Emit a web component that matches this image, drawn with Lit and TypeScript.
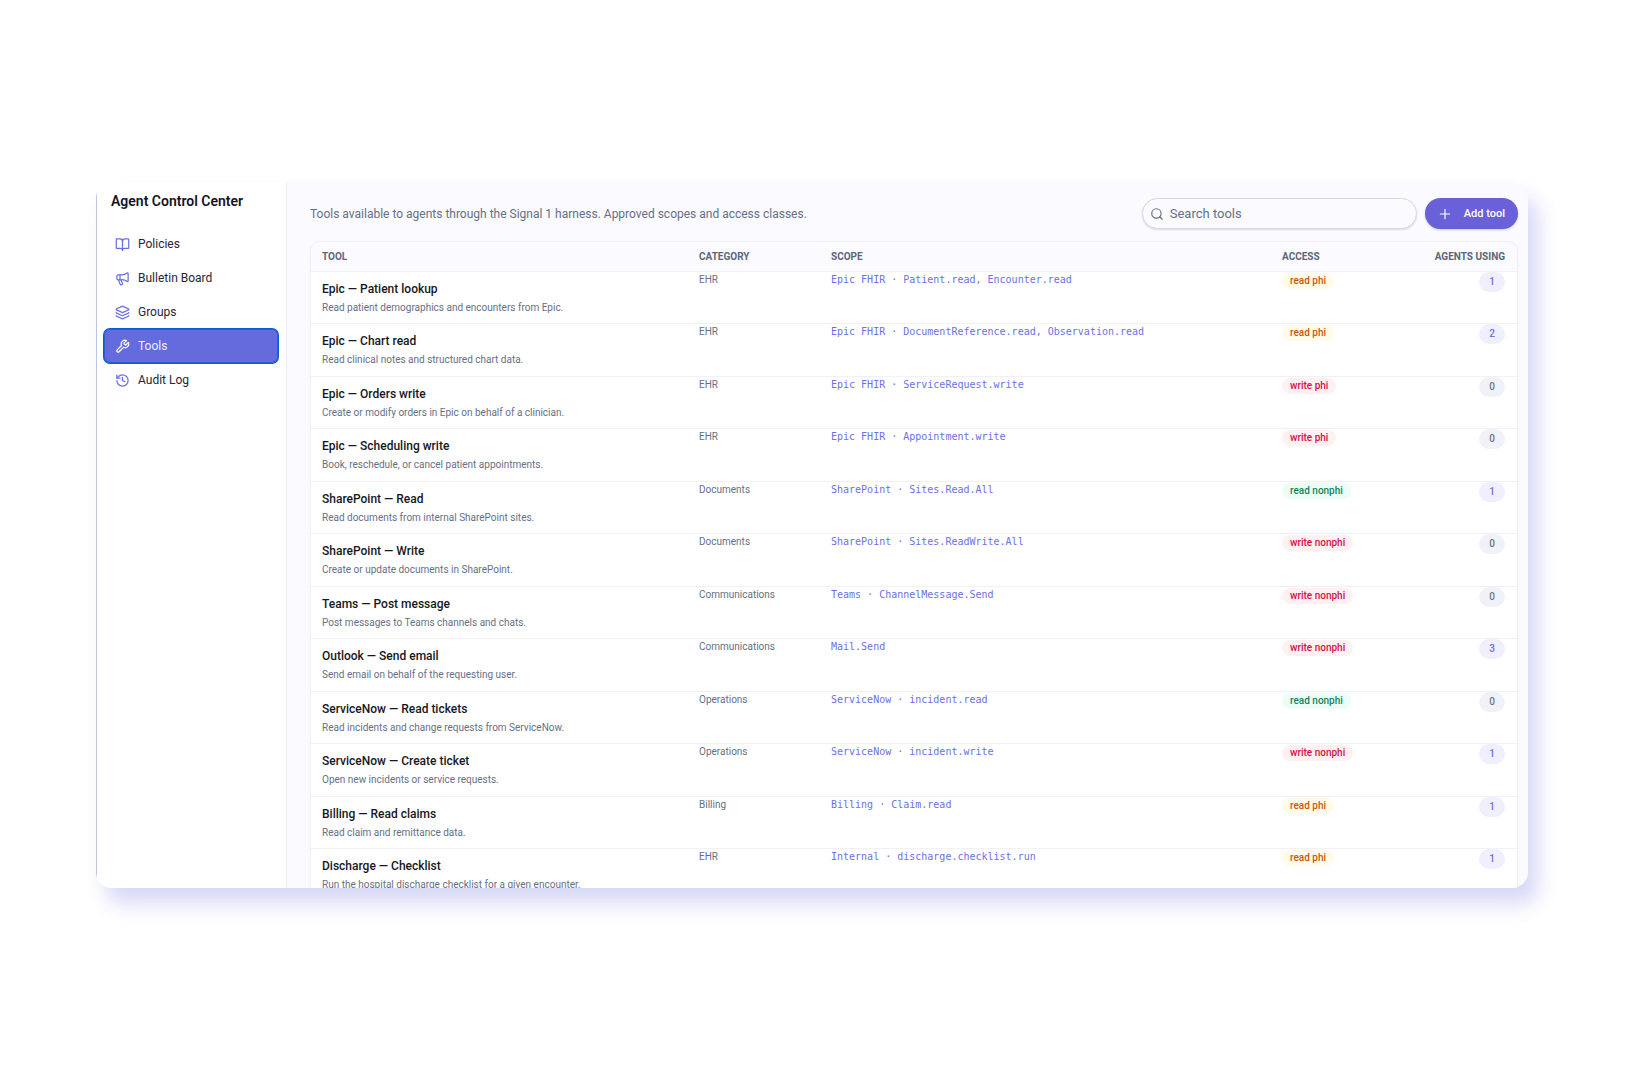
import { LitElement, html, css, svg } from "lit";
import { customElement, state } from "lit/decorators.js";
import { classMap } from "lit/directives/class-map.js";

type Access = "read phi" | "write phi" | "read nonphi" | "write nonphi";

interface Tool {
  name: string;
  summary: string;
  category: string;
  scope: string;
  access: Access;
  agents: number;
}

const TOOLS: Tool[] = [
  { name: "Epic — Patient lookup", summary: "Read patient demographics and encounters from Epic.", category: "EHR", scope: "Epic FHIR · Patient.read, Encounter.read", access: "read phi", agents: 1 },
  { name: "Epic — Chart read", summary: "Read clinical notes and structured chart data.", category: "EHR", scope: "Epic FHIR · DocumentReference.read, Observation.read", access: "read phi", agents: 2 },
  { name: "Epic — Orders write", summary: "Create or modify orders in Epic on behalf of a clinician.", category: "EHR", scope: "Epic FHIR · ServiceRequest.write", access: "write phi", agents: 0 },
  { name: "Epic — Scheduling write", summary: "Book, reschedule, or cancel patient appointments.", category: "EHR", scope: "Epic FHIR · Appointment.write", access: "write phi", agents: 0 },
  { name: "SharePoint — Read", summary: "Read documents from internal SharePoint sites.", category: "Documents", scope: "SharePoint · Sites.Read.All", access: "read nonphi", agents: 1 },
  { name: "SharePoint — Write", summary: "Create or update documents in SharePoint.", category: "Documents", scope: "SharePoint · Sites.ReadWrite.All", access: "write nonphi", agents: 0 },
  { name: "Teams — Post message", summary: "Post messages to Teams channels and chats.", category: "Communications", scope: "Teams · ChannelMessage.Send", access: "write nonphi", agents: 0 },
  { name: "Outlook — Send email", summary: "Send email on behalf of the requesting user.", category: "Communications", scope: "Mail.Send", access: "write nonphi", agents: 3 },
  { name: "ServiceNow — Read tickets", summary: "Read incidents and change requests from ServiceNow.", category: "Operations", scope: "ServiceNow · incident.read", access: "read nonphi", agents: 0 },
  { name: "ServiceNow — Create ticket", summary: "Open new incidents or service requests.", category: "Operations", scope: "ServiceNow · incident.write", access: "write nonphi", agents: 1 },
  { name: "Billing — Read claims", summary: "Read claim and remittance data.", category: "Billing", scope: "Billing · Claim.read", access: "read phi", agents: 1 },
  { name: "Discharge — Checklist", summary: "Run the hospital discharge checklist for a given encounter.", category: "EHR", scope: "Internal · discharge.checklist.run", access: "read phi", agents: 1 },
];

const ICONS = {
  book: svg`<path d="M12 6v15"/><path d="M3 18a1 1 0 0 1-1-1V4a1 1 0 0 1 1-1h5a4 4 0 0 1 4 4 4 4 0 0 1 4-4h5a1 1 0 0 1 1 1v13a1 1 0 0 1-1 1h-6a3 3 0 0 0-3 3 3 3 0 0 0-3-3z"/>`,
  megaphone: svg`<path d="M11 6a13 13 0 0 0 8.4-2.8A1 1 0 0 1 21 4v12a1 1 0 0 1-1.6.8A13 13 0 0 0 11 14H5a2 2 0 0 1-2-2V8a2 2 0 0 1 2-2z"/><path d="M6 14a12 12 0 0 0 2.4 7.2 2 2 0 0 0 3.2-2.4A8 8 0 0 1 10 14"/><path d="M8 6v8"/>`,
  layers: svg`<path d="M12.83 2.18a2 2 0 0 0-1.66 0L2.6 6.08a1 1 0 0 0 0 1.83l8.58 3.91a2 2 0 0 0 1.66 0l8.58-3.9a1 1 0 0 0 0-1.83z"/><path d="M2 12a1 1 0 0 0 .58.91l8.6 3.91a2 2 0 0 0 1.65 0l8.58-3.9A1 1 0 0 0 22 12"/><path d="M2 17a1 1 0 0 0 .58.91l8.6 3.91a2 2 0 0 0 1.65 0l8.58-3.9A1 1 0 0 0 22 17"/>`,
  wrench: svg`<path d="M14.7 6.3a1 1 0 0 0 0 1.4l1.6 1.6a1 1 0 0 0 1.4 0l3.77-3.77a6 6 0 0 1-7.94 7.94l-6.91 6.91a2.12 2.12 0 0 1-3-3l6.91-6.91a6 6 0 0 1 7.94-7.94l-3.76 3.76z"/>`,
  history: svg`<path d="M3 12a9 9 0 1 0 9-9 9.75 9.75 0 0 0-6.74 2.74L3 8"/><path d="M3 3v5h5"/><path d="M12 7v5l4 2"/>`,
  search: svg`<circle cx="11" cy="11" r="8"/><path d="m21 21-4.3-4.3"/>`,
  plus: svg`<path d="M4 12h16M12 4v16"/>`,
};

const NAV: { label: string; icon: keyof typeof ICONS }[] = [
  { label: "Policies", icon: "book" },
  { label: "Bulletin Board", icon: "megaphone" },
  { label: "Groups", icon: "layers" },
  { label: "Tools", icon: "wrench" },
  { label: "Audit Log", icon: "history" },
];

const icon = (name: keyof typeof ICONS) =>
  html`<svg class="icon icon-${name}" viewBox="0 0 24 24" aria-hidden="true">${ICONS[name]}</svg>`;

@customElement("side-nav")
export class SideNav extends LitElement {
  static styles = css`
    :host {
      display: block;
      box-sizing: border-box;
      padding: 11px 8px 12px 7px;
      background: #fff;
      border-left: 1px solid #bfc3e0;
      border-right: 1px solid #eeeef5;
    }
    .title {
      margin: 0 0 18px;
      padding: 0 7px;
      font-size: 14px;
      line-height: 16px;
      font-weight: 600;
      color: #14141f;
    }
    .item {
      display: flex;
      align-items: center;
      gap: 8px;
      height: 34px;
      padding: 0 11px;
      border-radius: 6px;
      font-size: 12px;
      color: #262633;
      text-decoration: none;
    }
    .icon {
      width: 15px;
      height: 15px;
      fill: none;
      stroke: #6a6ee6;
      stroke-width: 2;
      stroke-linecap: round;
      stroke-linejoin: round;
    }
    .item.current {
      background: #636bdd;
      box-shadow: 0 0 0 1px #0b5ad3, inset 0 0 0 1px #2a60d6;
      color: #f1f1ff;
    }
    .item.current .icon {
      stroke: #fff;
    }
  `;

  @state() private current = "Tools";

  render() {
    return html`
      <h1 class="title">Agent Control Center</h1>
      <nav aria-label="Agent Control Center">
        ${NAV.map(
          (n) => html`<a
            href="#"
            class=${classMap({ item: true, current: n.label === this.current })}
            aria-current=${n.label === this.current ? "page" : "false"}
            @click=${(e: Event) => {
              e.preventDefault();
              this.current = n.label;
            }}
            >${icon(n.icon)}<span>${n.label}</span></a
          >`,
        )}
      </nav>
    `;
  }
}

@customElement("tools-table")
export class ToolsTable extends LitElement {
  static properties = { rows: { attribute: false } };
  declare rows: Tool[];

  static styles = css`
    :host {
      display: block;
      border: 1px solid #f0f0f5;
      border-radius: 10px 10px 0 0;
      background: #fff;
      overflow: hidden;
      box-shadow: 0 1px 3px rgb(30 30 80 / 4%);
    }
    .table {
      width: 100%;
      border-collapse: separate;
      border-spacing: 0;
      table-layout: fixed;
      text-align: left;
    }
    .col-tool { width: 377px; }
    .col-category { width: 132px; }
    .col-access { width: 128px; }
    .col-agents { width: 118px; }
    .head {
      height: 30px;
      box-sizing: border-box;
      padding: 0 12px 0 11px;
      background: #fafaff;
      border-bottom: 1px solid #f0f0f5;
      font-size: 10px;
      font-weight: 700;
      text-transform: uppercase;
      color: #5d6678;
    }
    .row { height: 52px; }
    .row:nth-child(even) { height: 53px; }
    .cell {
      box-sizing: border-box;
      padding: 0 12px 0 11px;
      vertical-align: top;
      border-bottom: 1px solid #f1f1f5;
      font-size: 10px;
      line-height: 16px;
      font-weight: 400;
      color: #667085;
    }
    .row:last-child .cell { border-bottom: 0; }
    .tool { padding-top: 9px; }
    .name {
      display: block;
      margin-bottom: 3px;
      font-size: 12px;
      font-weight: 500;
      color: #171721;
    }
    .scope {
      font-family: "DejaVu Sans Mono", monospace;
      color: #6c70e8;
    }
    .end { text-align: right; }
    .badge {
      display: block;
      width: fit-content;
      margin-top: 1px;
      padding: 0 8px;
      border-radius: 8px;
      font-weight: 500;
    }
    .phi.read { background: #fffbe8; color: #c8570b; }
    .nonphi.read { background: #ebfdf4; color: #18835a; }
    .write { background: #fff0f2; color: #d3104a; }
    .count {
      display: block;
      width: 26px;
      margin-left: auto;
      border-radius: 10px;
      line-height: 20px;
      text-align: center;
      font-weight: 500;
      background: #f0f2f7;
      color: #6b7488;
    }
    .count.used { background: #efeffd; color: #6e72e4; }
  `;

  render() {
    return html`<table class="table">
      <colgroup>
        <col class="col-tool" />
        <col class="col-category" />
        <col />
        <col class="col-access" />
        <col class="col-agents" />
      </colgroup>
      <thead>
        <tr>
          <th class="head" scope="col">Tool</th>
          <th class="head" scope="col">Category</th>
          <th class="head" scope="col">Scope</th>
          <th class="head" scope="col">Access</th>
          <th class="head end" scope="col">Agents using</th>
        </tr>
      </thead>
      <tbody>
        ${this.rows.map(
          (t) => html`<tr class="row">
            <th class="cell tool" scope="row"><span class="name">${t.name}</span>${t.summary}</th>
            <td class="cell">${t.category}</td>
            <td class="cell scope">${t.scope}</td>
            <td class="cell"><span class="badge ${t.access}">${t.access}</span></td>
            <td class="cell"><span class=${classMap({ count: true, used: t.agents > 0 })}>${t.agents}</span></td>
          </tr>`,
        )}
      </tbody>
    </table>`;
  }
}

@customElement("app-root")
export class AppRoot extends LitElement {
  static styles = css`
    :host {
      display: flex;
      box-sizing: border-box;
      height: 100vh;
      padding: 182px 98px 181px 96px;
      background: #fff;
      font-family: Roboto, "Liberation Sans", sans-serif;
    }
    .window {
      flex: 1;
      display: grid;
      grid-template-columns: 191px 1fr;
      min-width: 0;
      min-height: 0;
      overflow: hidden;
      border-radius: 16px;
      background: #fafaff;
      box-shadow: 10px 16px 20px rgb(82 92 216 / 23%);
    }
    .main {
      min-width: 0;
      padding: 16px 10px 0 23px;
    }
    .toolbar {
      display: flex;
      align-items: center;
      gap: 8px;
      margin-bottom: 12px;
    }
    .intro {
      flex: 1;
      margin: 0;
      font-size: 12px;
      line-height: 16px;
      color: #667085;
    }
    .search {
      display: flex;
      align-items: center;
      gap: 6px;
      box-sizing: border-box;
      width: 275px;
      height: 31px;
      padding: 0 7px;
      border: 1px solid #d9d9e0;
      border-radius: 16px;
      box-shadow: 0 1px 2px rgb(30 30 60 / 14%);
      background: #fbfbff;
    }
    .icon {
      flex: none;
      width: 14px;
      height: 14px;
      fill: none;
      stroke: #667085;
      stroke-width: 2;
      stroke-linecap: round;
      stroke-linejoin: round;
    }
    .icon-plus { stroke: #fff; }
    .field {
      flex: 1;
      min-width: 0;
      padding: 0;
      border: 0;
      outline: 0;
      background: none;
      font: 13px/16px Roboto, "Liberation Sans", sans-serif;
      color: #262633;
    }
    .field::placeholder {
      color: #667085;
      opacity: 1;
    }
    .add {
      display: flex;
      align-items: center;
      gap: 12px;
      height: 31px;
      padding: 0 13px;
      border: 0;
      border-radius: 16px;
      background: #6a60d8;
      color: #fff;
      font: 500 11px/16px Roboto, "Liberation Sans", sans-serif;
      box-shadow: 0 1px 2px rgb(60 50 160 / 25%);
    }
  `;

  @state() private query = "";

  render() {
    const q = this.query.trim().toLowerCase();
    const rows = TOOLS.filter((t) => `${t.name} ${t.summary}`.toLowerCase().includes(q));
    return html`<div class="window">
      <side-nav></side-nav>
      <main class="main">
        <div class="toolbar">
          <p class="intro">Tools available to agents through the Signal 1 harness. Approved scopes and access classes.</p>
          <label class="search">
            ${icon("search")}
            <input
              class="field"
              type="text"
              placeholder="Search tools"
              aria-label="Search tools"
              @input=${(e: Event) => (this.query = (e.target as HTMLInputElement).value)}
            />
          </label>
          <button class="add" type="button">${icon("plus")}<span>Add tool</span></button>
        </div>
        <tools-table .rows=${rows}></tools-table>
      </main>
    </div>`;
  }
}
